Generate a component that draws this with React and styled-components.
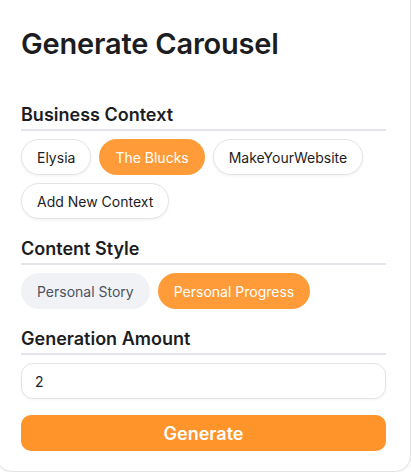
import styled, { createGlobalStyle } from "styled-components";
import { useState } from "react";

const GlobalStyle = createGlobalStyle`
    body {
        margin: 0;
        background: #ffffff;
        font-family: Inter, "Noto Sans", sans-serif;
        color: #1f1f1f;
    }
`;

const Card = styled.div`
    box-sizing: border-box;
    width: 415px;
    margin: -20px 0 0 -4px;
    padding: 46px 24px 20px 24px;
    background: #ffffff;
    border: 1px solid #e4e4e7;
    border-radius: 16px;
    box-shadow: 0 1px 3px rgba(0, 0, 0, 0.05);
`;

const Title = styled.h1`
    margin: 0 0 43px 0;
    font-size: 29px;
    line-height: 34px;
    font-weight: 600;
    letter-spacing: -0.2px;
    color: #1d1d1f;
`;

const Section = styled.div`
    display: flex;
    flex-direction: column;
    margin-bottom: 19px;

    &:last-of-type {
        margin-bottom: 16px;
    }
`;

const Label = styled.div`
    font-size: 18px;
    line-height: 22px;
    font-weight: 600;
    color: #1d1d1f;
    padding-bottom: 3px;
    border-bottom: 2px solid #e4e4ea;
    margin-bottom: 8px;
`;

const Chips = styled.div`
    display: flex;
    flex-wrap: wrap;
    gap: 8px;
`;

const Chip = styled.button`
    font-family: inherit;
    font-size: 14px;
    height: 36px;
    padding: 0 15px;
    border-radius: 18px;
    cursor: pointer;
    border: 1px solid ${({ $variant }) => ($variant === "outline" ? "#e4e4e7" : "transparent")};
    background: ${({ $variant }) =>
        $variant === "active" ? "#ff9b38" : $variant === "soft" ? "#f1f2f6" : "#ffffff"};
    color: ${({ $variant }) =>
        $variant === "active" ? "#ffffff" : $variant === "soft" ? "#4b5260" : "#1d1d1f"};
    box-shadow: ${({ $variant }) => ($variant === "outline" ? "0 1px 3px rgba(0,0,0,0.06)" : "none")};
`;

const Input = styled.input`
    box-sizing: border-box;
    width: 100%;
    height: 36px;
    padding: 0 13px;
    font-family: inherit;
    font-size: 14px;
    color: #1d1d1f;
    border: 1px solid #e4e4e7;
    border-radius: 12px;
    outline: none;
    box-shadow: 0 1px 3px rgba(0, 0, 0, 0.05);
`;

const GenerateButton = styled.button`
    display: block;
    width: 100%;
    height: 36px;
    border: none;
    border-radius: 10px;
    background: #ff942b;
    color: #ffffff;
    font-family: inherit;
    font-size: 18px;
    font-weight: 600;
    cursor: pointer;
`;

const contexts = ["Elysia", "The Blucks", "MakeYourWebsite", "Add New Context"];
const styles = ["Personal Story", "Personal Progress"];

export default function App() {
    const [context, setContext] = useState("The Blucks");
    const [style, setStyle] = useState("Personal Progress");
    const [amount, setAmount] = useState("2");

    return (
        <>
            <GlobalStyle />
            <Card>
                <Title>Generate Carousel</Title>
                <Section>
                    <Label>Business Context</Label>
                    <Chips>
                        {contexts.map((c) => (
                            <Chip
                                key={c}
                                $variant={c === context ? "active" : "outline"}
                                onClick={() => setContext(c)}
                            >
                                {c}
                            </Chip>
                        ))}
                    </Chips>
                </Section>
                <Section>
                    <Label>Content Style</Label>
                    <Chips>
                        {styles.map((s) => (
                            <Chip
                                key={s}
                                $variant={s === style ? "active" : "soft"}
                                onClick={() => setStyle(s)}
                            >
                                {s}
                            </Chip>
                        ))}
                    </Chips>
                </Section>
                <Section>
                    <Label>Generation Amount</Label>
                    <Input value={amount} onChange={(e) => setAmount(e.target.value)} />
                </Section>
                <GenerateButton>Generate</GenerateButton>
            </Card>
        </>
    );
}
